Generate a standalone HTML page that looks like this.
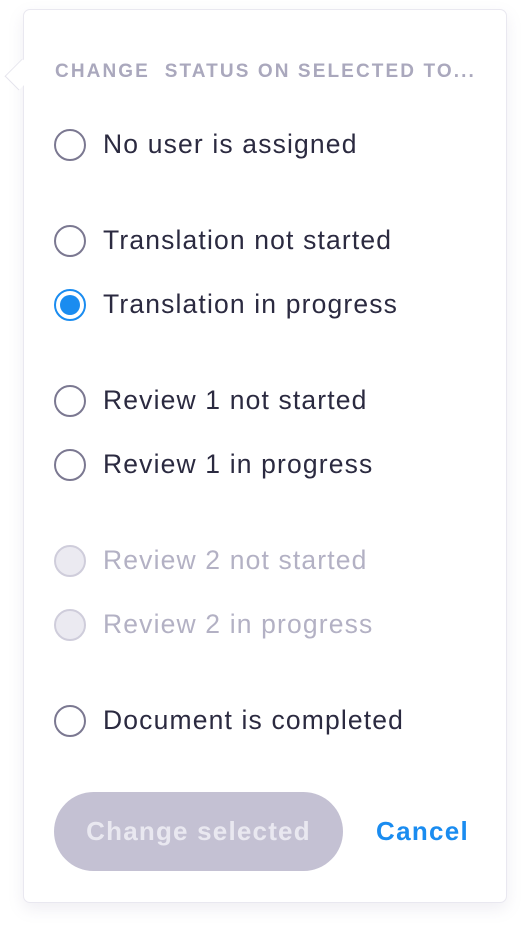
<!DOCTYPE html>
<html><head><meta charset="utf-8"><style>
html,body{margin:0;padding:0;background:#fff;width:524px;height:928px;overflow:hidden;font-family:"Liberation Sans",sans-serif}
.panel{position:absolute;left:23px;top:9px;width:482px;height:892px;border:1px solid #e9e8f0;border-radius:7px;background:#fff;box-shadow:0 6px 16px rgba(120,115,160,0.12)}
.arrow{position:absolute;left:8px;top:62px;width:24px;height:24px;background:#fff;border-left:1px solid #e4e3ec;border-bottom:1px solid #e4e3ec;transform:rotate(45deg) scaleX(0.8);z-index:1}
.cover{position:absolute;left:24px;top:50px;width:20px;height:50px;background:#fff;z-index:2}
.title{position:absolute;left:55px;top:61px;font-size:19px;font-weight:bold;color:#aaa8bd;letter-spacing:2.1px;z-index:3;white-space:nowrap}
.row{position:absolute;left:54px;height:32px;z-index:3}
.r{position:absolute;left:0;top:0;width:28px;height:28px;border:2px solid #7b7891;border-radius:50%;box-sizing:content-box}
.r.on{border-color:#1a8cf0}
.r.on::after{content:"";position:absolute;left:4px;top:4px;width:20px;height:20px;border-radius:50%;background:#1a8cf0}
.r.dis{border-color:#cfcddb;background:#ebeaf1}
.t{position:absolute;left:49px;top:-1px;font-size:26.5px;color:#2b2a40;white-space:nowrap;line-height:32px;letter-spacing:1.15px}
.t.dis{color:#b3b1c4}
.btn{position:absolute;left:54px;top:792px;width:289px;height:79px;border-radius:40px;background:#c4c1d3;color:#e9e8f0;font-weight:bold;font-size:26px;text-align:center;line-height:79px;z-index:3;letter-spacing:1.2px}
.cancel{position:absolute;left:376px;top:792px;line-height:79px;font-size:26px;font-weight:bold;color:#1a8cf0;z-index:3;letter-spacing:1.3px}
</style></head><body>
<div class="panel"></div>
<div class="arrow"></div>
<div class="cover"></div>
<div class="title">CHANGE&nbsp; STATUS ON SELECTED TO...</div>
<div class="row" style="top:129px"><div class="r"></div><div class="t">No user is assigned</div></div>
<div class="row" style="top:225px"><div class="r"></div><div class="t">Translation not started</div></div>
<div class="row" style="top:289px"><div class="r on"></div><div class="t">Translation in progress</div></div>
<div class="row" style="top:385px"><div class="r"></div><div class="t">Review 1 not started</div></div>
<div class="row" style="top:449px"><div class="r"></div><div class="t">Review 1 in progress</div></div>
<div class="row" style="top:545px"><div class="r dis"></div><div class="t dis">Review 2 not started</div></div>
<div class="row" style="top:609px"><div class="r dis"></div><div class="t dis">Review 2 in progress</div></div>
<div class="row" style="top:705px"><div class="r"></div><div class="t">Document is completed</div></div>
<div class="btn">Change selected</div>
<div class="cancel">Cancel</div>
</body></html>
